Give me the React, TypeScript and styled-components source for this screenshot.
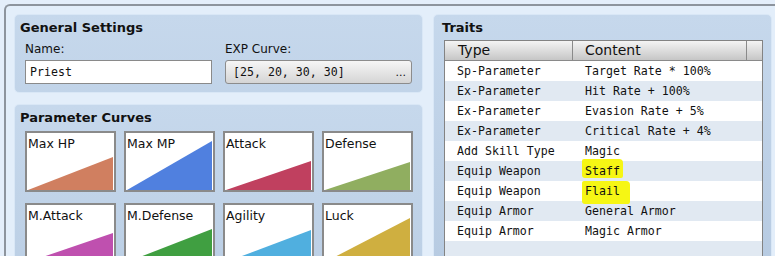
import styled, { createGlobalStyle } from "styled-components";

const GlobalStyle = createGlobalStyle`
  html, body {
    margin: 0;
    padding: 0;
  }
  body {
    width: 775px;
    height: 256px;
    overflow: hidden;
    background: #e4eefa;
    font-family: "DejaVu Sans", "Noto Sans", sans-serif;
    color: #111;
  }
`

const Frame = styled.div`
  margin: 4px 0 0 4px;
  border-top: 2px solid #8d949d;
  border-left: 2px solid #8d949d;
  border-top-left-radius: 6px;
  background: #e3eefa;
  padding: 8px 3px 0 8px;
  display: grid;
  grid-template-columns: 409px 339px;
  column-gap: 10px;
  height: 242px;
  overflow: hidden;
`

const Column = styled.div`
  display: flex;
  flex-direction: column;
  gap: 11px;
`

const Group = styled.section<{ $padRight?: number }>`
  background: linear-gradient(#c6d8ec, #b6cae1 260px);
  border: 1px solid #d9e7f6;
  border-radius: 5px;
  padding: 4px ${p => p.$padRight ?? 10}px 8px 10px;
`

const GroupTitle = styled.h2<{ $shift: number }>`
  margin: 0 0 0 ${p => p.$shift}px;
  font-size: 13px;
  font-weight: bold;
  line-height: 17px;
`

const Fields = styled.div`
  display: grid;
  grid-template-columns: 187px 187px;
  column-gap: 13px;
  margin-top: 6px;
`

const Field = styled.div`
  display: flex;
  flex-direction: column;
  gap: 3px;
`

const Label = styled.span`
  font-size: 12px;
  line-height: 15px;
`

const mono = `"DejaVu Sans Mono", "Liberation Mono", monospace`

const TextBox = styled.div`
  box-sizing: border-box;
  height: 24px;
  border: 1px solid #8a8a8a;
  background: #fff;
  font-family: ${mono};
  font-size: 11.6px;
  display: flex;
  align-items: center;
  padding-left: 4px;
`

const PickButton = styled.div`
  box-sizing: border-box;
  height: 24px;
  border: 1px solid #8c8c8c;
  border-radius: 3px;
  background: linear-gradient(#f6f6f6, #d5d5d5);
  font-family: ${mono};
  font-size: 11.6px;
  display: flex;
  align-items: center;
  justify-content: space-between;
  padding: 0 5px 0 7px;
`

const Dots = styled.span`
  font-family: "DejaVu Sans", sans-serif;
  font-size: 11px;
`

const CurveGrid = styled.div`
  display: grid;
  grid-template-columns: repeat(4, 91px);
  grid-auto-rows: 61px;
  gap: 11px 8px;
  margin-top: 5px;
`

const CurveBox = styled.div`
  box-sizing: border-box;
  border: 2px solid #8a8a8a;
  background: #fff;
  display: grid;
`

const CurveName = styled.span`
  grid-area: 1 / 1;
  font-size: 12.5px;
  line-height: 15px;
  padding: 3px 0 0 1px;
  align-self: start;
  position: relative;
`

const CurveArt = styled.svg`
  grid-area: 1 / 1;
  width: 87px;
  height: 57px;
  display: block;
`

const Table = styled.div`
  margin-top: 4px;
  border: 1px solid #838383;
  border-bottom: none;
  background: #fff;
`

const HeadRow = styled.div`
  display: grid;
  grid-template-columns: 127px 1px 173px 1px 16px;
  height: 19px;
  border-bottom: 1px solid #8a8a8a;
  background: linear-gradient(#f4f4f4, #c6c6c6);
`

const HeadCell = styled.div<{ $pad: number }>`
  font-size: 14px;
  line-height: 19px;
  padding-left: ${p => p.$pad}px;
`

const Divider = styled.div`
  background: #8a8a8a;
`

const Row = styled.div<{ $alt: boolean }>`
  display: grid;
  grid-template-columns: 128px 1fr;
  height: 20px;
  background: ${p => (p.$alt ? "#e1e9f2" : "#fff")};
  font-family: ${mono};
  font-size: 11.6px;
  line-height: 20px;
`

const Cell = styled.div`
  padding-left: 12px;
  white-space: nowrap;
`

const Marked = styled.span<{ $t: number; $r: number; $b: number; $l: number }>`
  position: relative;
  z-index: 0;
  &::before {
    content: "";
    position: absolute;
    z-index: -1;
    top: ${p => p.$t}px;
    right: ${p => p.$r}px;
    bottom: ${p => p.$b}px;
    left: ${p => p.$l}px;
    background: #f6f614;
    border-radius: 2px 4px 2px 3px;
  }
`

const curves = [
  { name: "Max HP", color: "#d07f60", h: 33 },
  { name: "Max MP", color: "#5080df", h: 49 },
  { name: "Attack", color: "#c0405f", h: 29 },
  { name: "Defense", color: "#90ae60", h: 28 },
  { name: "M.Attack", color: "#bf50af", h: 29 },
  { name: "M.Defense", color: "#409f41", h: 33 },
  { name: "Agility", color: "#50afdf", h: 32 },
  { name: "Luck", color: "#cfaf40", h: 44 },
]

type Mark = { t: number; r: number; b: number; l: number }

const traits: { type: string; content: string; mark?: Mark }[] = [
  { type: "Sp-Parameter", content: "Target Rate * 100%" },
  { type: "Ex-Parameter", content: "Hit Rate + 100%" },
  { type: "Ex-Parameter", content: "Evasion Rate + 5%" },
  { type: "Ex-Parameter", content: "Critical Rate + 4%" },
  { type: "Add Skill Type", content: "Magic" },
  { type: "Equip Weapon", content: "Staff", mark: { t: -5, r: -3, b: 0, l: -3 } },
  { type: "Equip Weapon", content: "Flail", mark: { t: -3, r: -10, b: -6, l: -3 } },
  { type: "Equip Armor", content: "General Armor" },
  { type: "Equip Armor", content: "Magic Armor" },
  { type: "", content: "" },
]

function App() {
  return (
    <>
      <GlobalStyle />
      <Frame>
        <Column>
          <Group>
            <GroupTitle $shift={-5}>General Settings</GroupTitle>
            <Fields>
              <Field>
                <Label>Name:</Label>
                <TextBox>Priest</TextBox>
              </Field>
              <Field>
                <Label>EXP Curve:</Label>
                <PickButton>
                  [25, 20, 30, 30]
                  <Dots>...</Dots>
                </PickButton>
              </Field>
            </Fields>
          </Group>

          <Group $padRight={9}>
            <GroupTitle $shift={-5}>Parameter Curves</GroupTitle>
            <CurveGrid>
              {curves.map(c => (
                <CurveBox key={c.name}>
                  <CurveArt viewBox="0 0 87 57">
                    <polygon points={`1,57 86,57 86,${57 - c.h}`} fill={c.color} />
                  </CurveArt>
                  <CurveName>{c.name}</CurveName>
                </CurveBox>
              ))}
            </CurveGrid>
          </Group>
        </Column>

        <Column>
          <Group $padRight={8}>
            <GroupTitle $shift={-2}>Traits</GroupTitle>
            <Table>
              <HeadRow>
                <HeadCell $pad={13}>Type</HeadCell>
                <Divider />
                <HeadCell $pad={12}>Content</HeadCell>
                <Divider />
                <div />
              </HeadRow>
              {traits.map((t, i) => (
                <Row key={i} $alt={i % 2 === 1}>
                  <Cell>{t.type}</Cell>
                  <Cell>
                    {t.mark ? (
                      <Marked $t={t.mark.t} $r={t.mark.r} $b={t.mark.b} $l={t.mark.l}>
                        {t.content}
                      </Marked>
                    ) : (
                      t.content
                    )}
                  </Cell>
                </Row>
              ))}
            </Table>
          </Group>
        </Column>
      </Frame>
    </>
  )
}

export default App
